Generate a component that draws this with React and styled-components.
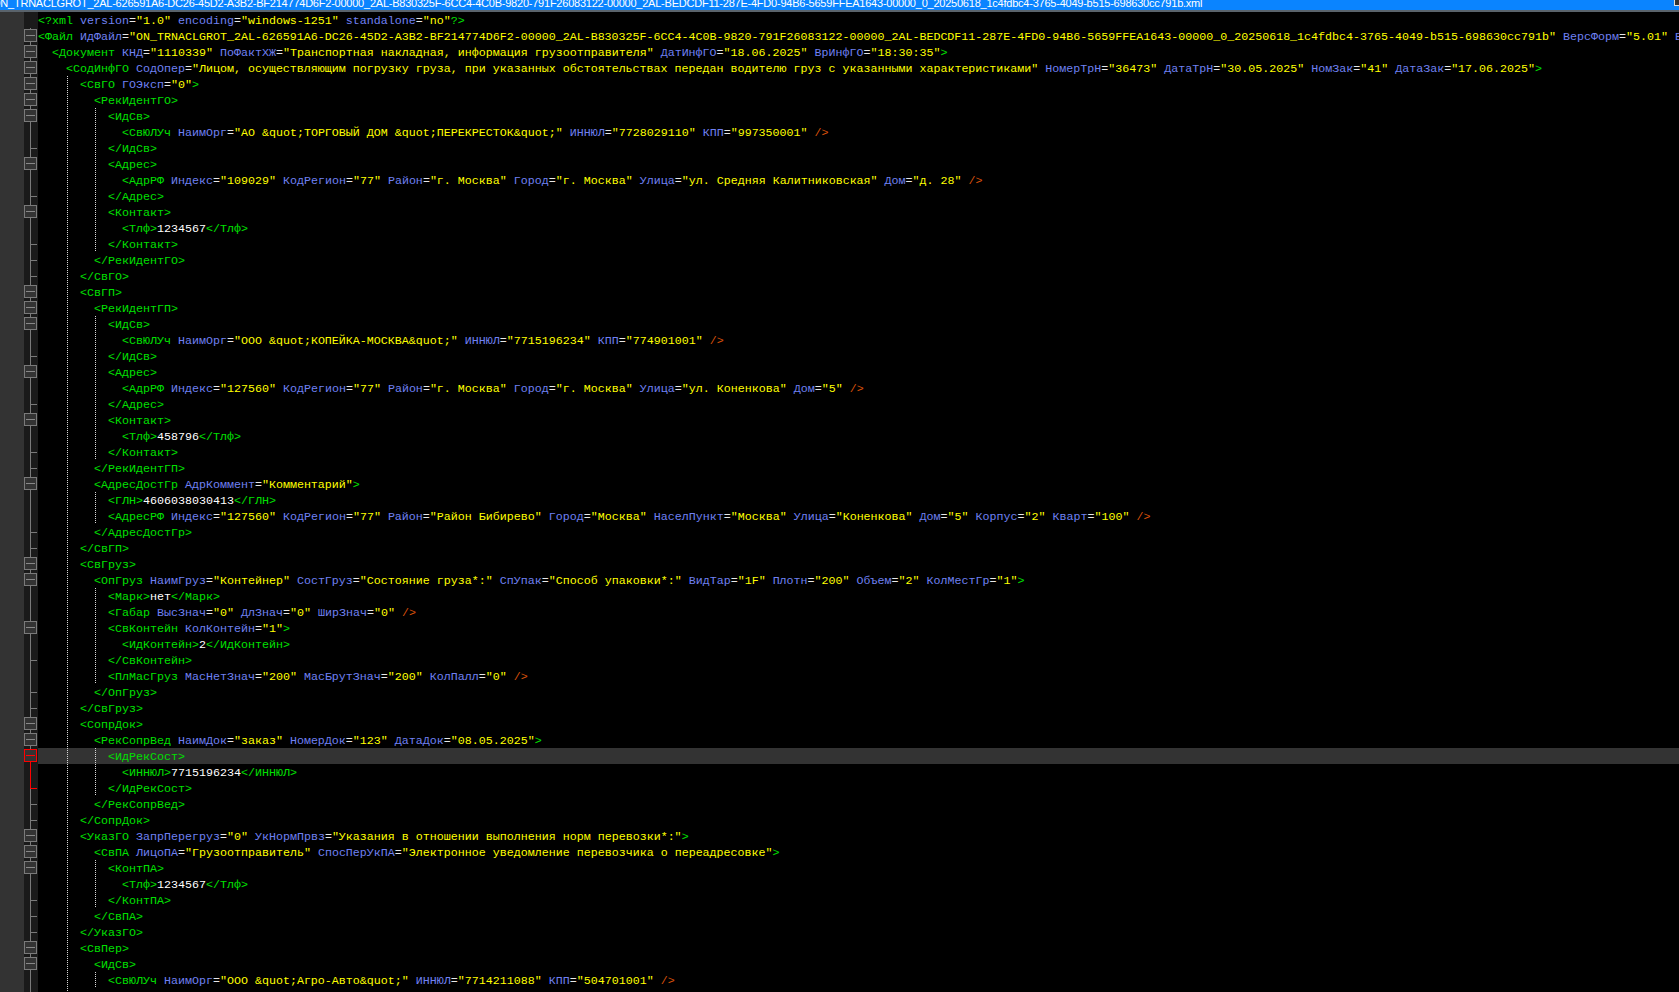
import React from 'react';
import styled, { createGlobalStyle } from 'styled-components';

const TITLE = 'ON_TRNACLGROT_2AL-626591A6-DC26-45D2-A3B2-BF214774D6F2-00000_2AL-B830325F-6CC4-4C0B-9820-791F26083122-00000_2AL-BEDCDF11-287E-4FD0-94B6-5659FFEA1643-00000_0_20250618_1c4fdbc4-3765-4049-b515-698630cc791b.xml';

const SOURCE = [
    '<?xml version="1.0" encoding="windows-1251" standalone="no"?>',
    '<Файл ИдФайл="ON_TRNACLGROT_2AL-626591A6-DC26-45D2-A3B2-BF214774D6F2-00000_2AL-B830325F-6CC4-4C0B-9820-791F26083122-00000_2AL-BEDCDF11-287E-4FD0-94B6-5659FFEA1643-00000_0_20250618_1c4fdbc4-3765-4049-b515-698630cc791b" ВерсФорм="5.01" ВерсПрог="1.0">',
    '<Документ КНД="1110339" ПоФактХЖ="Транспортная накладная, информация грузоотправителя" ДатИнфГО="18.06.2025" ВрИнфГО="18:30:35">',
    '<СодИнфГО СодОпер="Лицом, осуществляющим погрузку груза, при указанных обстоятельствах передан водителю груз с указанными характеристиками" НомерТрН="36473" ДатаТрН="30.05.2025" НомЗак="41" ДатаЗак="17.06.2025">',
    '<СвГО ГОЭксп="0">',
    '<РекИдентГО>',
    '<ИдСв>',
    '<СвЮЛУч НаимОрг="АО &quot;ТОРГОВЫЙ ДОМ &quot;ПЕРЕКРЕСТОК&quot;" ИННЮЛ="7728029110" КПП="997350001" />',
    '</ИдСв>',
    '<Адрес>',
    '<АдрРФ Индекс="109029" КодРегион="77" Район="г. Москва" Город="г. Москва" Улица="ул. Средняя Калитниковская" Дом="д. 28" />',
    '</Адрес>',
    '<Контакт>',
    '<Тлф>1234567</Тлф>',
    '</Контакт>',
    '</РекИдентГО>',
    '</СвГО>',
    '<СвГП>',
    '<РекИдентГП>',
    '<ИдСв>',
    '<СвЮЛУч НаимОрг="ООО &quot;КОПЕЙКА-МОСКВА&quot;" ИННЮЛ="7715196234" КПП="774901001" />',
    '</ИдСв>',
    '<Адрес>',
    '<АдрРФ Индекс="127560" КодРегион="77" Район="г. Москва" Город="г. Москва" Улица="ул. Коненкова" Дом="5" />',
    '</Адрес>',
    '<Контакт>',
    '<Тлф>458796</Тлф>',
    '</Контакт>',
    '</РекИдентГП>',
    '<АдресДостГр АдрКоммент="Комментарий">',
    '<ГЛН>4606038030413</ГЛН>',
    '<АдресРФ Индекс="127560" КодРегион="77" Район="Район Бибирево" Город="Москва" НаселПункт="Москва" Улица="Коненкова" Дом="5" Корпус="2" Кварт="100" />',
    '</АдресДостГр>',
    '</СвГП>',
    '<СвГруз>',
    '<ОпГруз НаимГруз="Контейнер" СостГруз="Состояние груза*:" СпУпак="Способ упаковки*:" ВидТар="1F" Плотн="200" Объем="2" КолМестГр="1">',
    '<Марк>нет</Марк>',
    '<Габар ВысЗнач="0" ДлЗнач="0" ШирЗнач="0" />',
    '<СвКонтейн КолКонтейн="1">',
    '<ИдКонтейн>2</ИдКонтейн>',
    '</СвКонтейн>',
    '<ПлМасГруз МасНетЗнач="200" МасБрутЗнач="200" КолПалл="0" />',
    '</ОпГруз>',
    '</СвГруз>',
    '<СопрДок>',
    '<РекСопрВед НаимДок="заказ" НомерДок="123" ДатаДок="08.05.2025">',
    '<ИдРекСост>',
    '<ИННЮЛ>7715196234</ИННЮЛ>',
    '</ИдРекСост>',
    '</РекСопрВед>',
    '</СопрДок>',
    '<УказГО ЗапрПерегруз="0" УкНормПрвз="Указания в отношении выполнения норм перевозки*:">',
    '<СвПА ЛицоПА="Грузоотправитель" СпосПерУкПА="Электронное уведомление перевозчика о переадресовке">',
    '<КонтПА>',
    '<Тлф>1234567</Тлф>',
    '</КонтПА>',
    '</СвПА>',
    '</УказГО>',
    '<СвПер>',
    '<ИдСв>',
    '<СвЮЛУч НаимОрг="ООО &quot;Агро-Авто&quot;" ИННЮЛ="7714211088" КПП="504701001" />',
    '</ИдСв>',
];

const CURRENT_LINE = 46; // zero based, the caret sits on <ИдРекСост>

const COLORS = {
    tag: '#00e000',
    attr: '#6f80f2',
    eq: '#e8e8e8',
    value: '#ffff00',
    end: '#d9500a',
    text: '#ffffff',
};

// works out depth and fold marker of every line from the tags
const buildLines = (source) => {
    let depth = 0;
    return source.map((src, i) => {
        let level = depth;
        let fold = depth > 0 ? 'line' : 'none';
        if (src.startsWith('</')) {
            depth -= 1;
            level = depth;
            fold = 'end';
        } else if (src.startsWith('<?')) {
            fold = 'none';
        } else if (!src.endsWith('/>') && !src.includes('</')) {
            depth += 1;
            fold = 'box';
        }
        return { src, level, fold, index: i };
    });
};

const tokenize = (src) => {
    const parts = src.match(/"[^"]*"|\s*\/>|<[^\s>]*|\??>|=|\s+|[^\s=<>"]+/g) || [];
    return parts.map((part, i) => {
        let kind = 'text';
        if (part[0] === '"') kind = 'value';
        else if (part.trim() === '/>') kind = 'end';
        else if (part[0] === '<' || part.endsWith('>')) kind = 'tag';
        else if (part === '=') kind = 'eq';
        else if (parts[i + 1] === '=') kind = 'attr';
        return { part, kind };
    });
};

const GlobalStyle = createGlobalStyle`
    html, body {
        margin:0;
        padding:0;
        background:#000;
        overflow:hidden;
    }
`;

const Window = styled.div`
    width:100vw;
    height:100vh;
    display:flex;
    flex-direction:column;
    overflow:hidden;
    background:#000;
`;

const TitleBar = styled.div`
    flex:none;
    height:10px;
    display:flex;
    align-items:flex-end;
    justify-content:space-between;
    overflow:hidden;
    background:#0a84ff;
`;

const TitleText = styled.div`
    flex:none;
    height:16px;
    line-height:16px;
    margin-left:-8px;
    margin-bottom:-1px;
    font-family:"Liberation Sans", Arial, sans-serif;
    font-size:11px;
    letter-spacing:-0.23px;
    color:#fff;
    white-space:nowrap;
`;

const CloseButton = styled.div`
    flex:none;
    align-self:flex-start;
    width:4px;
    height:5px;
    background:#333;
    border-left:1px solid #ddd;
    border-bottom:1px solid #ddd;
`;

const Separator = styled.div`
    flex:none;
    height:2px;
    background:#5a636b;
`;

const Editor = styled.div`
    flex:1;
    min-height:0;
    overflow:hidden;
`;

const Row = styled.div`
    display:flex;
    height:16px;
`;

const Margin = styled.div`
    flex:none;
    width:24px;
    background:#333;
`;

const FoldColumn = styled.div`
    flex:none;
    width:14px;
    height:16px;
    background:#1a1a1a;
    svg {
        display:block;
    }
`;

const Code = styled.div`
    flex:1;
    min-width:0;
    display:flex;
    overflow:hidden;
    background:${(p) => (p.$current ? '#333' : '#000')};
`;

const Indent = styled.span`
    flex:none;
    width:14px;
    height:16px;
    background:${(p) => (p.$guide
        ? 'repeating-linear-gradient(to bottom, #d8d8d8 0 1px, transparent 1px 2px) 1px 0 / 1px 100% no-repeat'
        : 'none')};
`;

const Source = styled.span`
    flex:none;
    margin-top:1px;
    font-family:"Liberation Mono", "Courier New", monospace;
    font-size:11.67px;
    line-height:16px;
    white-space:pre;
`;

const Token = styled.span`
    color:${(p) => COLORS[p.$kind]};
`;

const FoldMarker = ({ fold, active }) => {
    const gray = '#7a7a7a';
    const stroke = active ? '#ff0000' : gray;
    if (fold === 'none') return null;
    return (
        <svg width="14" height="16" viewBox="0 0 14 16">
            {fold === 'box' && (
                <>
                    <path d="M6.5 0V2M6.5 13V16" stroke={gray} fill="none" />
                    {active && <path d="M6.5 13V16" stroke={stroke} fill="none" />}
                    <rect x="0.5" y="1.5" width="12" height="12" fill="#333" stroke={stroke} />
                    <path d="M2 7.5H11" stroke={active ? stroke : '#888'} fill="none" />
                </>
            )}
            {fold === 'line' && <path d="M6.5 0V16" stroke={stroke} fill="none" />}
            {fold === 'end' && (
                <>
                    <path d="M6.5 8V16" stroke={gray} fill="none" />
                    <path d="M6.5 0V8.5H13" stroke={stroke} fill="none" />
                </>
            )}
        </svg>
    );
};

const CodeLine = ({ line }) => {
    const { src, level, fold, index } = line;
    const current = index === CURRENT_LINE;
    const active = index >= CURRENT_LINE && index <= CURRENT_LINE + 2;
    return (
        <Row>
            <Margin />
            <FoldColumn>
                <FoldMarker fold={fold} active={active} />
            </FoldColumn>
            <Code $current={current}>
                {Array.from({ length: level }, (_, i) => (
                    <Indent key={i} $guide={i > 0 && i % 2 === 0} />
                ))}
                <Source>
                    {tokenize(src).map((t, i) => (
                        <Token key={i} $kind={t.kind}>{t.part}</Token>
                    ))}
                </Source>
            </Code>
        </Row>
    );
};

const App = () => {
    const lines = buildLines(SOURCE);
    return (
        <Window>
            <GlobalStyle />
            <TitleBar>
                <TitleText>{TITLE}</TitleText>
                <CloseButton />
            </TitleBar>
            <Separator />
            <Editor>
                {lines.map((line) => (
                    <CodeLine key={line.index} line={line} />
                ))}
            </Editor>
        </Window>
    );
};

export default App;
